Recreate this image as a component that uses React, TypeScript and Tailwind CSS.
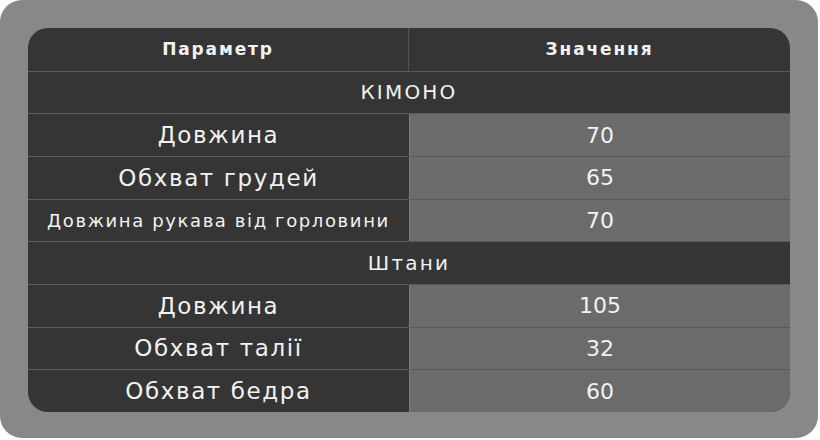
import React from "react";

type Row = { kind: "section"; label: string } | { kind: "data"; label: string; value: string; small?: boolean };

const rows: Row[] = [
  { kind: "section", label: "КІМОНО" },
  { kind: "data", label: "Довжина", value: "70" },
  { kind: "data", label: "Обхват грудей", value: "65" },
  { kind: "data", label: "Довжина рукава від горловини", value: "70", small: true },
  { kind: "section", label: "Штани" },
  { kind: "data", label: "Довжина", value: "105" },
  { kind: "data", label: "Обхват талії", value: "32" },
  { kind: "data", label: "Обхват бедра", value: "60" },
];

const App: React.FC = () => {
  return (
    <div className="w-[820px] h-[440px] bg-white" style={{ fontFamily: '"DejaVu Sans", sans-serif' }}>
      <div className="w-[818px] h-[438px] bg-[#888888] rounded-[22px] p-[28px]">
        <div className="h-[384px] rounded-[20px] overflow-hidden bg-[#353535] text-[#f2f2f2] grid grid-rows-9">
          <div className="grid grid-cols-2 text-[17px] font-bold tracking-[0.11em]">
            <div className="flex items-center justify-center border-r border-[#555555]">Параметр</div>
            <div className="flex items-center justify-center">Значення</div>
          </div>
          {rows.map((row, i) =>
            row.kind === "section" ? (
              <div
                key={i}
                className="flex items-center justify-center border-t border-[#5a5a5a] text-[20px] tracking-[0.11em]"
              >
                {row.label}
              </div>
            ) : (
              <div key={i} className="grid grid-cols-2 border-t border-[#5a5a5a]">
                <div
                  className={`flex items-center justify-center whitespace-nowrap ${
                    row.small ? "text-[18px] tracking-[0.09em]" : "text-[23px] tracking-[0.07em]"
                  }`}
                >
                  {row.label}
                </div>
                <div className="flex items-center justify-center bg-[#6b6b6b] border-l border-[#7d7d7d] text-[22px]">
                  {row.value}
                </div>
              </div>
            )
          )}
        </div>
      </div>
    </div>
  );
};

export default App;
